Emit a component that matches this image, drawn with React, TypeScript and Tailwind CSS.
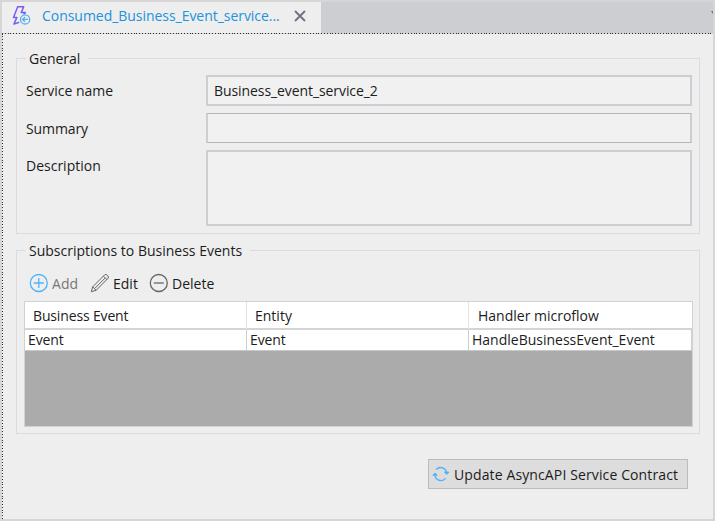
import type { ReactNode } from 'react';

function Group({ title, className, children }: { title: ReactNode; className: string; children: ReactNode }) {
  return (
    <section className={`relative ml-[13px] w-[684px] border border-[#dcdcde] ${className}`}>
      <h2 className="absolute -top-[10px] left-[9px] h-5 bg-[#eeeeee] pr-[8px] pl-[3px] leading-5">{title}</h2>
      {children}
    </section>
  );
}

function Field({ label, value, className }: { label: ReactNode; value?: string; className: string }) {
  return (
    <div className="flex pl-[9px]">
      <label className="w-[180px] pt-[6px] leading-5">{label}</label>
      <div className={`w-[486px] bg-[#f1f1f1] pl-[6px] leading-[27px] ${className}`}>
        {value && <span className="tracking-[-0.08px]">{value}</span>}
      </div>
    </div>
  );
}

function EventIcon() {
  return (
    <svg width="20" height="22" viewBox="0 0 20 22" fill="none">
      <path d="M7.2 17.2 1.9 19.1 4.9 12.4 1.5 12.4 5.7 1.7H11.7L9.2 7.6h4.2l-1.8 2" stroke="#7b5cf5" strokeWidth="1.5" strokeLinejoin="round" />
      <circle cx="13.1" cy="14.4" r="4.6" stroke="#55aef0" strokeWidth="1.3" />
      <path d="M16 14.4h-5M13 12 10.6 14.4l2.4 2.4" stroke="#55aef0" strokeWidth="1.3" />
    </svg>
  );
}

function CircleIcon({ plus }: { plus?: boolean }) {
  return (
    <svg width="20" height="20" viewBox="0 0 20 20" fill="none" stroke={plus ? '#4db2fc' : '#666666'} strokeWidth="1.3">
      <circle cx="9.8" cy="10" r="8.5" />
      <path d={plus ? 'M4.8 10h10M9.8 5v10' : 'M4.8 10h10'} />
    </svg>
  );
}

function PencilIcon() {
  return (
    <svg width="20" height="20" viewBox="0 0 20 20" fill="none" stroke="#666666" strokeWidth="1" strokeLinejoin="round">
      <path d="m1.3 18.7 1.4-4.9L14.7 1.8q1.2-.9 2.4.3l.7.7q1.2 1.2.3 2.4L6.2 17.3ZM2.7 13.8l3.5 3.5M13.4 3.1l3.5 3.5M5 15.2 15.1 5.1" />
    </svg>
  );
}

function RefreshIcon() {
  return (
    <svg width="18" height="16" viewBox="0 0 18 16" fill="none" stroke="#4db2fc" strokeWidth="1.4">
      <path d="M4.2 3.6A6 6 0 0 1 14.6 6.8M13.6 12.4A6 6 0 0 1 3 9" />
      <path d="m12.3 6.1 2.5 2.4 2.2-2.4ZM.8 9.2 3 6.9l2.4 2.3Z" fill="#4db2fc" strokeWidth=".8" />
    </svg>
  );
}

export default function App() {
  return (
    <main className="h-[521px] w-[715px] overflow-hidden border-2 border-[#d6d6d7] bg-[#eeeeee] font-['Open_Sans','Noto_Sans',sans-serif] text-[14px] text-[#1c1c1c]">
      <header className="flex h-[31px] bg-[#cdced2]">
        <div className="flex w-[319px] bg-[#eeeeee] pt-[3px] pl-[10px]">
          <EventIcon />
          <span className="ml-[10px] w-[252px] pt-px leading-5 text-[#2192de]"><span className="tracking-[-0.04px]">Consumed_Business_Event_service...</span></span>
          <svg className="mt-[5px]" width="12" height="12" viewBox="0 0 12 12" stroke="#707180" strokeWidth="1.8"><path d="m1 1 10 10M11 1 1 11" /></svg>
        </div>
        <div className="mt-[9px] ml-auto h-[3px] w-[2px] bg-[#707180] [clip-path:polygon(0_0,100%_0,100%_100%)]" />
      </header>
      <div className="h-px bg-[repeating-linear-gradient(90deg,#303034_0_1px,#d3d3d7_1px_2.8px)]" />
      <div className="flex h-[485px]">
        <div className="w-px bg-[repeating-linear-gradient(0deg,#303034_0_1px,#eeeeee_1px_2.8px)]" />
        <div className="pt-6">
          <Group title={<span className="tracking-[-0.03px]">General</span>} className="h-[176px] pt-[16px]">
            <div className="flex flex-col gap-[7px]">
              <Field label={<span>Service name</span>} value="Business_event_service_2" className="h-[31px] border-2 border-[#cdcdd3]" />
              <Field label={<span className="tracking-[-0.1px]">Summary</span>} className="h-[30px] border-x-2 border-y border-x-[#cdcdd3] border-y-[#b5b5ba]" />
              <Field label={<span>Description</span>} className="h-[76px] border-2 border-[#cdcdd3]" />
            </div>
          </Group>
          <Group title={<span>Subscriptions to Business Events</span>} className="mt-4 h-[184px] pt-[22px]">
            <div className="flex h-[28px] pl-[12px] leading-[22px]">
              <div className="flex w-[61px] gap-[3px] text-[#777777]"><CircleIcon plus /><span className="tracking-[0.1px]">Add</span></div>
              <div className="flex w-[59px] gap-[3px]"><PencilIcon /><span>Edit</span></div>
              <div className="flex gap-[3px]"><CircleIcon /><span>Delete</span></div>
            </div>
            <div className="ml-[7px] h-[126px] w-[669px] border border-[#d2d2d2] bg-[#ababab]">
              <div className="grid h-[28px] grid-cols-[222px_222px_1fr] border-b-2 border-[#d4d4d4] bg-white leading-[27px]">
                <div className="border-r border-[#e3e3e3] pl-[8px]"><span className="tracking-[-0.15px]">Business Event</span></div>
                <div className="border-r border-[#e3e3e3] pl-[8px]"><span>Entity</span></div>
                <div className="pl-[9px]"><span>Handler microflow</span></div>
              </div>
              <div className="grid h-[21px] grid-cols-[222px_222px_1fr] border-b border-[#c8c8c8] bg-white leading-[20px]">
                <div className="border-r border-[#cfcfcf] pl-[3px]"><span className="tracking-[-0.1px]">Event</span></div>
                <div className="border-r border-[#cfcfcf] pl-[3px]"><span className="tracking-[-0.1px]">Event</span></div>
                <div className="border-r border-[#cfcfcf] pl-[3px]"><span>HandleBusinessEvent_Event</span></div>
              </div>
            </div>
          </Group>
          <button className="mt-[25px] ml-[425px] flex h-[30px] w-[260px] items-center border border-[#bcbcbc] bg-[#dddddd] pl-[3px]">
            <RefreshIcon /><span className="ml-[4px] whitespace-nowrap tracking-[0.12px]">Update AsyncAPI Service Contract</span>
          </button>
        </div>
      </div>
    </main>
  );
}
